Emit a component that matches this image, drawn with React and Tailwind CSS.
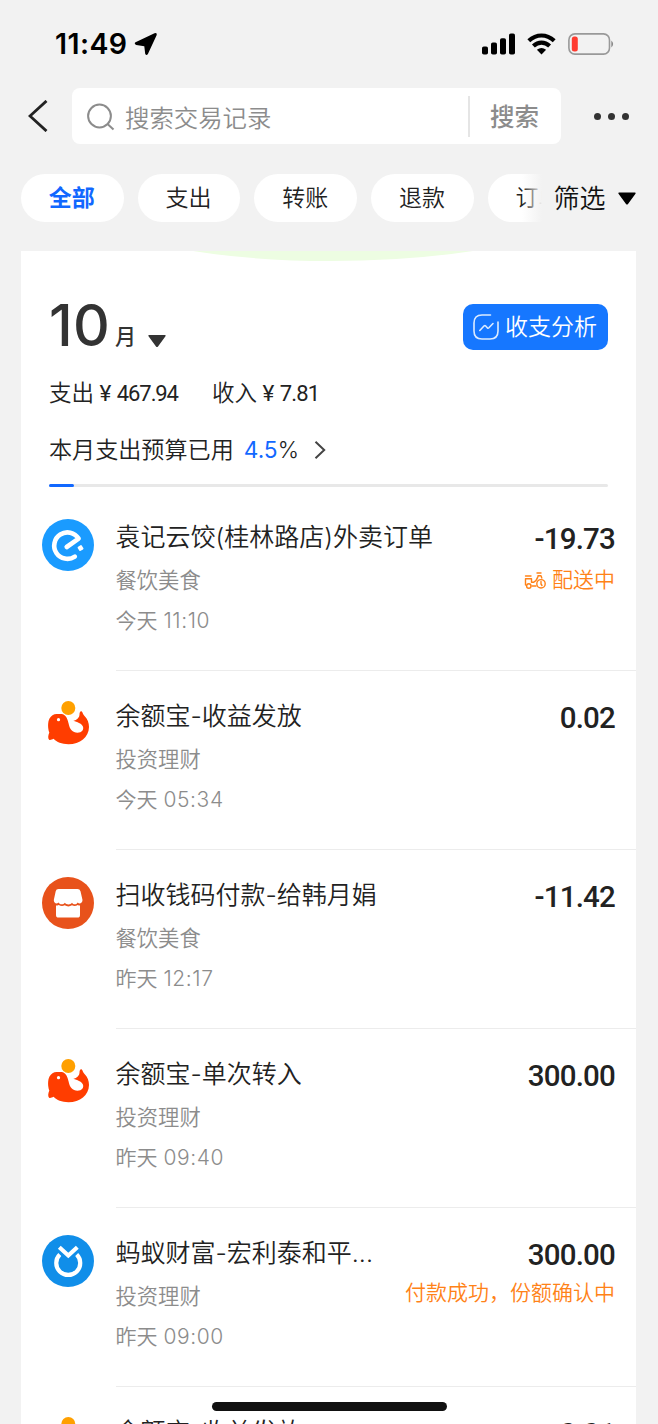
import React, { useState } from "react";

const tabs = ["全部", "支出", "转账", "退款", "订单"];

const records = [
  { icon: "eleme", title: "袁记云饺(桂林路店)外卖订单", category: "餐饮美食", day: "今天", time: "11:10", amount: "-19.73", status: "配送中", delivery: true },
  { icon: "yuebao", title: "余额宝-收益发放", category: "投资理财", day: "今天", time: "05:34", amount: "0.02" },
  { icon: "shop", title: "扫收钱码付款-给韩月娟", category: "餐饮美食", day: "昨天", time: "12:17", amount: "-11.42" },
  { icon: "yuebao", title: "余额宝-单次转入", category: "投资理财", day: "昨天", time: "09:40", amount: "300.00" },
  { icon: "fortune", title: "蚂蚁财富-宏利泰和平...", category: "投资理财", day: "昨天", time: "09:00", amount: "300.00", status: "付款成功，份额确认中" },
  { icon: "yuebao", title: "余额宝-收益发放", category: "投资理财", day: "昨天", time: "05:21", amount: "0.01" },
];

function RecordIcon({ name }) {
  if (name === "eleme") {
    return (
      <svg className="size-[52px]" viewBox="0 0 52 52" fill="none">
        <circle cx="26" cy="26" r="26" fill="#1a9bff" />
        <path d="M24.7 28 36.600 19.600A13.200 13.200 0 1 0 32.800 37.600" stroke="#fff" strokeWidth="4.600" strokeLinecap="round" strokeLinejoin="round" />
        <rect x="36.100" y="26.700" width="4.800" height="4.800" rx="1" fill="#fff" transform="rotate(-32 38.500 29)" />
      </svg>
    );
  }
  if (name === "yuebao") {
    return (
      <svg className="size-[52px]" viewBox="0 -1 52 52" fill="none">
        <circle cx="26.300" cy="9" r="7" fill="#ffa000" />
        <path
          d="M7.300 33.500C5.800 29.500 5.600 23 7.500 19.500C9 16.500 11.800 14.800 15 14.900H19.500C23.800 15.300 25.500 19.500 26.600 24.600C27.700 30.500 30.500 33.800 35.500 33.800C39.800 33.800 42.300 30.500 40.800 27.300C39.300 24.300 35.300 23.300 31.300 21.800C35 21 37.500 18.500 37.500 15.500C37.500 13.300 38.200 11.900 39.500 12.300C40.700 12.900 40.800 15.300 42.300 16.800C45.600 20 47 24 47 28C46.800 38.500 38 45.200 26.500 45.200C19.500 45.200 14.800 43.300 11.600 39.800C9.800 40.500 8.200 41.500 7.100 40.700C5.800 39.500 6 36.500 7.300 33.500Z"
          fill="#ff3d00"
        />
        <circle cx="16.500" cy="20.700" r="1.600" fill="#fff" />
      </svg>
    );
  }
  if (name === "shop") {
    return (
      <svg className="size-[52px]" viewBox="0 0 52 52">
        <circle cx="26" cy="26" r="26" fill="#e8521b" />
        <path
          d="M16.500 12H35.500Q37.800 12 38.500 14.200L40.500 23C40.500 26 37.300 27.500 35.700 25.400C34.300 27.900 31.500 27.900 30 25.700C28.500 28 24.500 28 22.800 25.700C21.300 27.900 18 27.900 16.500 25.400C14.600 27.500 11.800 26 11.800 23L13.700 14.200Q14.200 12 16.500 12Z"
          fill="#fff"
        />
        <path
          d="M14 28.500Q15.500 28.500 16.700 27.900Q19.700 30 22.700 28.300Q26.300 30.500 30 28.300Q33 30 35.700 27.900Q36.800 28.500 38 28.500V38Q38 40.600 35.400 40.600H16.600Q14 40.600 14 38Z"
          fill="#fff"
        />
      </svg>
    );
  }
  return (
    <svg className="size-[52px]" viewBox="0 0 52 52" fill="none" stroke="#fff" strokeWidth="4.200">
      <circle cx="26" cy="26" r="26" fill="#108ee9" stroke="none" />
      <path d="M17.800 19.400A12 12 0 1 0 34.700 19.400" />
      <path d="M17.300 12.300 26.300 20.500 35.300 12.300" />
    </svg>
  );
}

function StatusBar() {
  return (
    <div className="flex h-[88px] items-center justify-between pl-[55px] pr-[43px]">
      <div className="flex items-center gap-[7px]">
        <span className="text-[28.500px] leading-none font-semibold tracking-[0.400px]">11:49</span>
        <svg className="h-6 w-6" viewBox="0 0 24 24">
          <path d="M1.500 10.300 20.500 1.200Q23.300 .500 22.600 3.300L13.900 22Q12.300 24 11.200 21.700L10.300 14.200 2.300 13Q-.300 11.800 1.500 10.300Z" />
        </svg>
      </div>
      <div className="flex items-center gap-3">
        <svg className="h-[22px] w-[33px]" viewBox="0 0 33 22">
          <rect x="0" y="13.500" width="6" height="8" rx="1.800" />
          <rect x="9" y="9.500" width="6" height="12" rx="1.800" />
          <rect x="18" y="5.300" width="6" height="16.200" rx="1.800" />
          <rect x="27" y=".500" width="6" height="21" rx="1.800" />
        </svg>
        <svg className="h-[22px] w-[29px]" viewBox="0 0 29 22" fill="none" stroke="#000" strokeWidth="4.200">
          <path d="M1.800 7.800Q7.500 2.500 14.500 2.500T27.200 7.800" />
          <path d="M6.400 13Q10 9.700 14.500 9.700T22.600 13" />
          <path d="M9.900 16.700Q14.500 13.300 19.100 16.700L14.500 21.500Z" fill="#000" stroke="none" />
        </svg>
        <svg className="h-[22px] w-[47px]" viewBox="0 0 47 22" fill="none">
          <rect x=".900" y=".900" width="40.600" height="20.200" rx="6" stroke="#999" strokeWidth="1.600" />
          <rect x="3.800" y="3.500" width="6" height="15" rx="2.500" fill="#ff3b30" />
          <path d="M43.300 7.500Q47 11 43.300 14.500Z" fill="#888" />
        </svg>
      </div>
    </div>
  );
}

function SearchBar() {
  const [query, setQuery] = useState("");

  return (
    <div className="flex h-14 items-center pl-7 pr-[29px]">
      <svg className="h-8 w-5" viewBox="0 0 20 32" fill="none" stroke="#222" strokeWidth="2.800">
        <path d="M18.500 .900 2 16 18.500 31.100" />
      </svg>
      <div className="ml-6 flex h-14 w-[489px] items-center rounded-lg bg-white">
        <svg className="mt-0.5 ml-[15px] h-7 w-7" viewBox="0 0 28 28" fill="none" stroke="#8c8c8c" strokeWidth="2">
          <circle cx="12.500" cy="13" r="11.400" />
          <path d="m20.500 21 6 5.500" />
        </svg>
        <input
          className="ml-[10px] w-0 grow pt-[4px] text-[24.400px] font-[350] outline-none placeholder:text-[#8c8c8c]"
          placeholder="搜索交易记录"
          value={query}
          onChange={(e) => setQuery(e.target.value)}
        />
        <button className="h-[41px] w-[93px] border-l-2 border-[#e5e5e5] pr-0.5 text-[24.500px] leading-[43px] font-medium text-[#8c8c8c]">搜索</button>
      </div>
      <div className="mt-px ml-auto flex gap-[6.500px]">
        <i className="size-[7.500px] rounded-full bg-[#333]" />
        <i className="size-[7.500px] rounded-full bg-[#333]" />
        <i className="size-[7.500px] rounded-full bg-[#333]" />
      </div>
    </div>
  );
}

function FilterTabs() {
  const [active, setActive] = useState("全部");

  return (
    <div className="mt-[30px] flex h-12 items-center pl-[21px]">
      <div className="relative flex w-[521px] shrink-0 gap-[14px] overflow-hidden">
        {tabs.map((tab) => (
          <button
            key={tab}
            onClick={() => setActive(tab)}
            className={`h-12 w-[102.700px] shrink-0 rounded-full bg-white pr-px text-[23px] ${active === tab ? "font-bold text-[#1268ff]" : "font-[350] text-[#222]"}`}
          >
            {tab}
          </button>
        ))}
        <div className="absolute top-0 right-0 h-12 w-[20px] bg-linear-to-r from-transparent to-[#f2f2f2]" />
      </div>
      <button className="ml-[11.500px] flex items-center gap-3 pt-px text-[26px] leading-[49px] font-[350] text-[#111]">
        筛选
        <svg className="h-[13px] w-[18px]" viewBox="0 0 18 13">
          <path d="M1 .500H17Q18.200 1 17.300 2L10 12Q9 13 8 12L.700 2Q-.200 1 1 .500Z" />
        </svg>
      </button>
    </div>
  );
}

function MonthSummary() {
  return (
    <div className="relative h-[240px] overflow-hidden pl-7 pr-7 pt-[53px] text-[#222]">
      <svg className="absolute top-0 left-[172px] h-[10px] w-[280px]" viewBox="0 0 280 10">
        <path d="M0 0Q62 10 138 10T280 0Z" fill="#edfde2" />
      </svg>
      <div className="flex h-[47px] items-center justify-between">
        <div className="-mt-[5px] flex items-end text-[#333]">
          <span className="text-[57px] leading-[51px] font-medium tracking-[0.300px]">10</span>
          <span className="mb-[3px] ml-[5px] text-[21px] leading-[22px] font-medium">月</span>
          <svg className="mb-[4px] ml-[12px] h-3 w-[18px]" viewBox="0 0 18 12">
            <path d="M1 0H17Q18.200 .500 17.300 1.500L10 11.500Q9 12.500 8 11.500L.700 1.500Q-.200 .500 1 0Z" fill="#333" />
          </svg>
        </div>
        <button className="-mt-px flex h-[46px] w-[145px] items-center rounded-[10px] bg-[#1677ff] pl-[10px] text-[23px] leading-[46px] font-[350] text-white">
          <svg className="mr-[6px] size-[26px] shrink-0" viewBox="0 0 26 26" fill="none" stroke="#dcebff" strokeWidth="1.600" strokeLinecap="round" strokeLinejoin="round">
            <path d="M17.500 1H9Q1 1 1 9V17Q1 25 9 25H17Q25 25 25 17V8" />
            <path d="M6.800 16.500 11.200 11.800Q12 11.200 12.700 12L14.500 14Q15.200 14.500 15.900 13.800L20 9.500" />
          </svg>
          收支分析
        </button>
      </div>
      <div className="mt-[26px] flex h-8 items-center text-[22.500px] leading-8 font-[350] whitespace-nowrap">
        <span className="w-[163px]">
          支出<span className="mx-[5.500px] font-['Roboto'] font-normal">¥</span><span className="font-['Roboto'] text-[22px] font-normal tracking-[-1.100px]">467.94</span>
        </span>
        <span>
          收入<span className="mx-[5.500px] font-['Roboto'] font-normal">¥</span><span className="font-['Roboto'] text-[22px] font-normal tracking-[-0.900px]">7.81</span>
        </span>
      </div>
      <div className="mt-[25px] flex h-8 items-center text-[23.100px] leading-8 font-[350]">
        本月支出预算已用
        <span className="ml-[10px] text-[22.700px] font-normal text-[#1268ff]">4.5</span><span className="text-[22.700px]">%</span>
        <svg className="ml-[15px] h-[18px] w-3" viewBox="0 0 12 18" fill="none" stroke="#444" strokeWidth="2">
          <path d="m1.500 .800 8.700 8.200-8.700 8.200" />
        </svg>
      </div>
      <div className="mt-[18px] h-[3px] rounded-full bg-[#e8e8e8]">
        <div className="h-[3px] w-[4.500%] rounded-full bg-[#1268ff]" />
      </div>
    </div>
  );
}

function ScooterIcon() {
  return (
    <svg className="h-[17px] w-[22px]" viewBox="0 0 22 17" fill="none" stroke="#ff8217" strokeWidth="1.400" strokeLinecap="round" strokeLinejoin="round">
      <path d="M1.500 4H7M1.500 13V6.800H7.500V10.300H9.500Q12.500 9 14 4.500M8 14H12M13 1H17M14 3.800H17L17.800 6" />
      <circle cx="4.800" cy="14" r="2.200" />
      <circle cx="17" cy="11.800" r="4.200" />
      <path d="M17 9.500V12L18 13.500" />
    </svg>
  );
}

function RecordRow({ record }) {
  return (
    <li className="flex h-[179px] pl-[21px]">
      <div className="mt-7 w-[52px] shrink-0">
        <RecordIcon name={record.icon} />
      </div>
      <div className="-mb-px ml-[22px] flex grow justify-between border-b border-[#ececec] pt-7 pr-[21px] whitespace-nowrap">
        <div>
          <h3 className="-ml-[0.500px] text-[25px] leading-9 font-[350] text-[#222]">{record.title}</h3>
          <p className="-ml-[0.500px] mt-[9px] text-[21.300px] leading-8 font-[350] text-[#8c8c8c]">{record.category}</p>
          <p className="-ml-[0.500px] mt-[9px] text-[21px] leading-8 font-[350] text-[#8c8c8c]">
            {record.day} <span className="tracking-[0.600px]">{record.time}</span>
          </p>
        </div>
        <div className="flex flex-col items-end">
          <span className="mt-[2px] font-['Roboto'] text-[29.500px] leading-9 font-medium tracking-[-0.800px] text-[#222]">{record.amount}</span>
          {record.status && (
            <span className={`flex items-center gap-1.5 text-[21px] leading-8 font-[350] text-[#ff8217] ${record.delivery ? "mt-[7px]" : "mt-[4px]"}`}>
              {record.delivery && <ScooterIcon />}
              {record.status}
            </span>
          )}
        </div>
      </div>
    </li>
  );
}

function App() {
  return (
    <div className="relative h-[1424px] w-[658px] overflow-hidden bg-[#f2f2f2] font-['Inter','Noto_Sans_CJK_SC',sans-serif] text-black">
      <StatusBar />
      <SearchBar />
      <FilterTabs />
      <main className="mx-[21px] mt-[29px] w-[615px] bg-white">
        <MonthSummary />
        <ul>
          {records.map((record, index) => (
            <RecordRow key={index} record={record} />
          ))}
        </ul>
      </main>
      <div className="absolute bottom-[13px] left-[212px] h-[9px] w-[235px] rounded-full bg-[#111]" />
    </div>
  );
}

export default App;
